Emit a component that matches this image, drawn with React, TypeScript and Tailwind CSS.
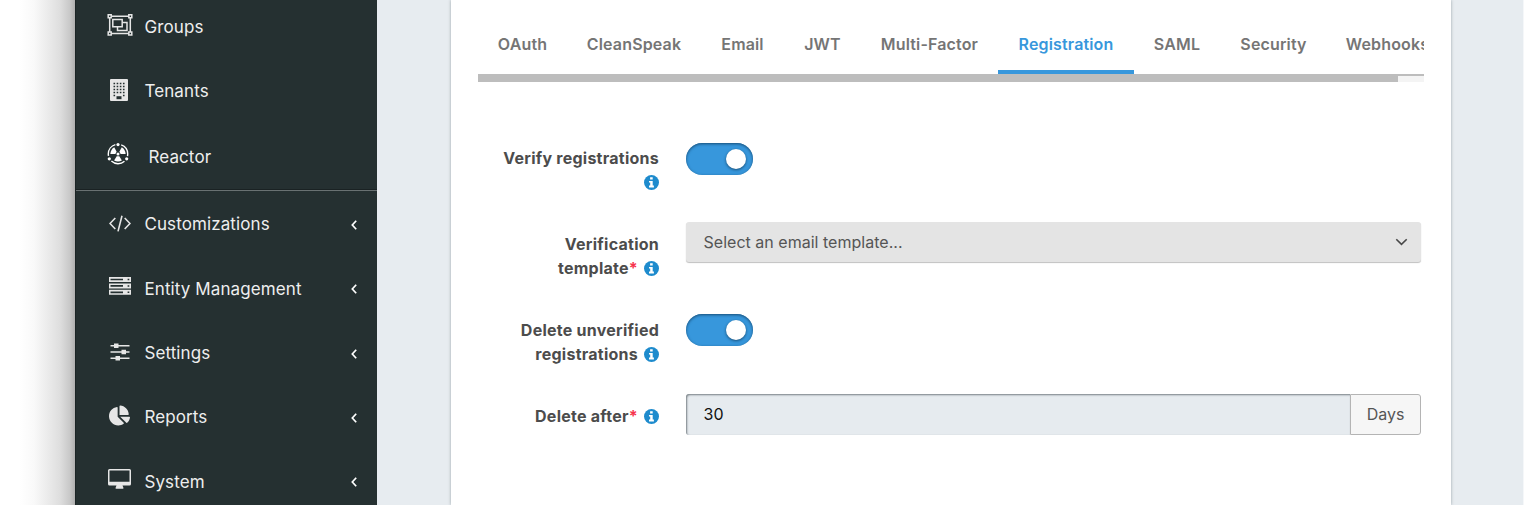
import React from "react";
import { FaChartPie } from "react-icons/fa";

const icons: Record<string, React.ReactNode> = {
  groups: (
    <svg width="26" height="22" viewBox="0 0 26 22" fill="none" stroke="#e6e6e6" strokeWidth="1.5">
      <path d="M4 2.3H22M4 19.5H22M2.7 4V18M23.3 4V18M5.8 5.5H15.2V12.7H5.8Z" />
      <path d="M15.5 8.5H20V16.5H10.5V12.7" />
      <path d="M1.2.8H4.2V3.8H1.2ZM21.8.8H24.8V3.8H21.8ZM1.2 18H4.2V21H1.2ZM21.8 18H24.8V21H21.8Z" fill="#253031" />
    </svg>
  ),
  tenants: (
    <svg width="18" height="22" viewBox="0 0 18 22">
      <rect width="18" height="22" rx="1" fill="#e6e6e6" />
      <path d="M3.5 4.5H15M3.5 7.5H15M3.5 10.5H15M3.5 13.5H15" stroke="#253031" strokeWidth="1.4" strokeDasharray="1.6 1.55" />
      <path d="M3.5 16.5H5.1M12.95 16.5H14.55" stroke="#253031" strokeWidth="1.4" />
      <path d="M6.5 18.7H11.5" stroke="#253031" strokeWidth="3" />
    </svg>
  ),
  reactor: (
    <svg width="22" height="22" viewBox="0 0 22 22">
      <circle cx="11" cy="11" r="9.7" fill="none" stroke="#fff" strokeWidth="1.4" strokeDasharray="14.3 6" strokeDashoffset="12.2" />
      <g fill="#fff">
        <circle cx="11" cy="1.6" r="1.6" />
        <circle cx="2.3" cy="15.8" r="1.6" />
        <circle cx="19.7" cy="15.8" r="1.6" />
        <circle cx="11" cy="11" r="1.5" />
        <path d="M9.7 13.3H12.3L14.9 17.6Q11 19.6 7.1 17.6Z" />
        <path d="M9.7 13.3H12.3L14.9 17.6Q11 19.6 7.1 17.6Z" transform="rotate(120 11 11)" />
        <path d="M9.7 13.3H12.3L14.9 17.6Q11 19.6 7.1 17.6Z" transform="rotate(240 11 11)" />
      </g>
    </svg>
  ),
  code: (
    <svg width="22" height="18" viewBox="0 0 22 18" fill="none" stroke="#e6e6e6" strokeWidth="1.6">
      <path d="M6.3 3L1 8.5L6.3 14M15.7 3L21 8.5L15.7 14M13 .8L9 16.4" />
    </svg>
  ),
  server: (
    <svg width="22" height="18" viewBox="0 0 22 18">
      <path d="M0 0H22V5H0ZM0 6.4H22V11.4H0ZM0 12.8H22V17.8H0Z" fill="#e6e6e6" />
      <path d="M1.5 2.5H14M1.5 8.9H14M1.5 15.3H14" stroke="#253031" strokeWidth="1.7" />
      <path d="M18.6 2.5H20.3M18.6 8.9H20.3M18.6 15.3H20.3" stroke="#253031" strokeWidth="1.5" />
    </svg>
  ),
  sliders: (
    <svg width="20" height="18" viewBox="0 0 20 18" fill="#e6e6e6">
      <path d="M.5 2H19.5V3.5H.5ZM.5 8.2H19.5V9.7H.5ZM.5 14.4H19.5V15.9H.5Z" />
      <path d="M4 .5H8.5V5H4ZM11.5 6.7H16V11.2H11.5ZM5.5 12.9H10V17.4H5.5Z" />
    </svg>
  ),
  reports: <FaChartPie size={21} color="#e6e6e6" />,
  system: (
    <svg width="23" height="20" viewBox="0 0 23 20">
      <path fillRule="evenodd" fill="#e6e6e6" d="M1.5 0H21.5Q23 0 23 1.5V15Q23 16.5 21.5 16.5H14.5L15.5 19Q15.5 19.7 15 19.7H8Q7.5 19.7 7.5 19L8.5 16.5H1.5Q0 16.5 0 15V1.5Q0 0 1.5 0ZM1.5 1.5V12.8H21.5V1.5Z" />
    </svg>
  ),
};

function NavItem({ icon, label, iconClass, textClass = "pt-0", className, arrow }: { icon: string; label: string; iconClass: string; textClass?: string; className: string; arrow?: boolean }) {
  return (
    <div className={`flex shrink-0 items-start ${className}`}>
      <span className={`shrink-0 ${iconClass}`}>{icons[icon]}</span>
      <span className={`-ml-[0.6px] grow text-[17px] leading-6 tracking-[0.11px] whitespace-nowrap ${textClass}`}>{label}</span>
      {arrow && (
        <svg width="6" height="10" viewBox="0 0 6 10" className="mt-[8px] mr-[20.5px]" fill="none" stroke="#fff" strokeWidth="1.7">
          <path d="M5.2.7L1.3 5L5.2 9.3" />
        </svg>
      )}
    </div>
  );
}

const tabs = [
  { label: "OAuth", width: "w-[89px]" },
  { label: "CleanSpeak", width: "w-[134px]" },
  { label: "Email", width: "w-[83px]" },
  { label: "JWT", width: "w-[77px]" },
  { label: "Multi-Factor", width: "w-[137px]" },
  { label: "Registration", width: "w-[136px]", active: true },
  { label: "SAML", width: "w-[86px]" },
  { label: "Security", width: "w-[107px]" },
  { label: "Webhooks", width: "w-[121px]" },
];

function Info() {
  return (
    <svg width="15" height="15" viewBox="0 0 15 15" className="ml-[6px] inline-block align-[-2px]">
      <circle cx="7.5" cy="7.5" r="7.5" fill="#1e8bcd" />
      <path d="M6.1 2.3H8.7V4.6H6.1ZM5 5.9H8.7V10.6H9.9V12.4H5V10.6H6.2V7.6H5Z" fill="#fff" />
    </svg>
  );
}

function Star() {
  return <span className="text-[#f6334c]">*</span>;
}

function Toggle() {
  return (
    <div className="flex h-8 w-[67px] items-center justify-end rounded-full bg-[#3797dc] pr-[7px] shadow-[inset_0_1px_3px_#174c74]">
      <div className="size-5 rounded-full bg-white shadow-[0_1px_3px_#174c74]" />
    </div>
  );
}

function Label({ children }: { children: React.ReactNode }) {
  return <div className="w-[181px] shrink-0 text-right text-[16px] leading-6 font-bold tracking-[0.25px] whitespace-nowrap text-[#4c4c4c]">{children}</div>;
}

export default function App() {
  return (
    <div className="flex h-[505px] w-[1524px] overflow-hidden bg-white font-['Inter',sans-serif]">
      <div className="w-[75px] shrink-0 bg-[linear-gradient(90deg,#fff_20px,#f9f9f9_34px,#ebebeb_48px,#dedede_60px,#c8c8c8_70px,#b0b0b0_75px)]" />
      <nav className="flex w-[302px] shrink-0 flex-col border-l border-[#1c2526] bg-[#253031] text-[#eee]">
        <NavItem icon="groups" label="Groups" iconClass="w-[38px]" textClass="pt-[1px]" className="h-[64px] pt-[14px] pl-[31px]" />
        <NavItem icon="tenants" label="Tenants" iconClass="w-[35px]" className="h-[65px] pt-[15px] pl-[34px]" />
        <NavItem icon="reactor" label="Reactor" iconClass="w-[42px]" textClass="pt-[2px]" className="h-[60px] pt-[14px] pl-[31px]" />
        <div className="h-[2px] shrink-0 border-b border-[#697172] bg-[#1a2223]" />
        <NavItem arrow icon="code" label="Customizations" iconClass="w-[36px] pt-[3px]" className="h-[65px] pt-[21px] pl-[33px]" />
        <NavItem arrow icon="server" label="Entity Management" iconClass="w-[36px] pt-[1px]" textClass="pt-[1px]" className="h-[64px] pt-[20px] pl-[33px]" />
        <NavItem arrow icon="sliders" label="Settings" iconClass="w-[35px] pt-[2px]" className="h-[65px] pt-[21px] pl-[34px]" />
        <NavItem arrow icon="reports" label="Reports" iconClass="w-[36px]" textClass="pt-[0.5px]" className="h-[64px] pt-[19.5px] pl-[33px]" />
        <NavItem arrow icon="system" label="System" iconClass="w-[37px]" textClass="pt-[1px]" className="h-[65px] pt-[20px] pl-[32px]" />
      </nav>
      <main className="grow border-r border-[#f5f7f9] bg-[#e7ecf0] pl-[74px]">
        <section className="h-[505px] w-[1000px] bg-white pl-[27px] shadow-[0_0_3px_#9aa3a8]">
          <div className="w-[946px] overflow-hidden pt-[14px]">
            <div className="flex h-[60px] w-[970px]">
              {tabs.map((tab) => (
                <div
                  key={tab.label}
                  className={`h-[60px] shrink-0 pt-[18px] text-center text-[16px] leading-6 font-semibold tracking-[0.15px] ${tab.width} ${tab.active ? "border-b-4 border-[#3797dc] text-[#3797dc]" : "text-[#757575]"}`}
                >
                  {tab.label}
                </div>
              ))}
            </div>
            <div className="h-2 bg-[#bdbdbd] pt-[2px] pl-[920px]">
              <div className="h-[6px] bg-[#f4f4f4]" />
            </div>
          </div>
          <div className="mt-[60.5px] flex h-[79.5px] gap-[27px]">
            <Label><div className="pt-[3.4px]">Verify registrations<br /><Info /></div></Label>
            <Toggle />
          </div>
          <div className="flex h-[92.4px] gap-[27px]">
            <Label><div className="pt-[10px]">Verification<br />template<Star /><Info /></div></Label>
            <div className="flex h-10 w-[735px] items-center justify-between rounded-[3px] bg-[#e4e4e4] pr-[13px] pl-[17.5px] text-[16px] tracking-[0.02px] text-[#555] shadow-[0_1px_1px_#c0c0c0]">
              <span>Select an email template...</span>
              <svg width="13" height="8" viewBox="0 0 13 8" fill="none" stroke="#484848" strokeWidth="1.6"><path d="M1.3 1.2L6.5 6.3L11.7 1.2" /></svg>
            </div>
          </div>
          <div className="flex h-[79.6px] gap-[27px]">
            <Label><div className="pt-[3.5px]">Delete unverified<br />registrations<Info /></div></Label>
            <Toggle />
          </div>
          <div className="flex gap-[27px]">
            <Label><div className="pt-[10px]">Delete after<Star /><Info /></div></Label>
            <div className="flex h-[41px] w-[735px] rounded-[3px] text-[16px]">
              <div className="flex grow items-center rounded-l-[3px] bg-[#e6ebef] pl-[17.5px] text-[#111] shadow-[inset_1px_1px_2px_#777f84]">30</div>
              <div className="flex w-[71px] items-center justify-center rounded-r-[3px] border border-[#b4b4b4] bg-[#f6f6f6] pb-[1px] text-[#555]">Days</div>
            </div>
          </div>
        </section>
      </main>
    </div>
  );
}
